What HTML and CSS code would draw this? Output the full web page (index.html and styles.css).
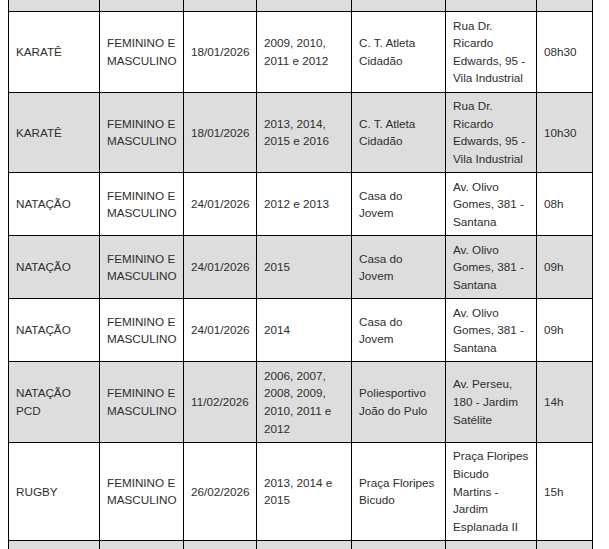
FILE: index.html
```html
<!DOCTYPE html>
<html lang="pt-BR">
<head>
<meta charset="utf-8">
<title>Calendário</title>
<link rel="stylesheet" href="styles.css">
</head>
<body>
<div class="viewport">
<table class="schedule">
  <colgroup>
    <col class="c-mod">
    <col class="c-nai">
    <col class="c-data">
    <col class="c-ano">
    <col class="c-local">
    <col class="c-end">
    <col class="c-hora">
  </colgroup>
  <tbody>
    <tr class="alt spacer"><td></td><td></td><td></td><td></td><td></td><td></td><td></td></tr>
    <tr>
      <td>KARATÊ</td>
      <td>FEMININO E MASCULINO</td>
      <td>18/01/2026</td>
      <td>2009, 2010, 2011 e 2012</td>
      <td>C. T. Atleta Cidadão</td>
      <td>Rua Dr. Ricardo Edwards, 95 - Vila Industrial</td>
      <td>08h30</td>
    </tr>
    <tr class="alt">
      <td>KARATÊ</td>
      <td>FEMININO E MASCULINO</td>
      <td>18/01/2026</td>
      <td>2013, 2014, 2015 e 2016</td>
      <td>C. T. Atleta Cidadão</td>
      <td>Rua Dr. Ricardo Edwards, 95 - Vila Industrial</td>
      <td>10h30</td>
    </tr>
    <tr>
      <td>NATAÇÃO</td>
      <td>FEMININO E MASCULINO</td>
      <td>24/01/2026</td>
      <td>2012 e 2013</td>
      <td>Casa do Jovem</td>
      <td>Av. Olivo Gomes, 381 - Santana</td>
      <td>08h</td>
    </tr>
    <tr class="alt">
      <td>NATAÇÃO</td>
      <td>FEMININO E MASCULINO</td>
      <td>24/01/2026</td>
      <td>2015</td>
      <td>Casa do Jovem</td>
      <td>Av. Olivo Gomes, 381 - Santana</td>
      <td>09h</td>
    </tr>
    <tr>
      <td>NATAÇÃO</td>
      <td>FEMININO E MASCULINO</td>
      <td>24/01/2026</td>
      <td>2014</td>
      <td>Casa do Jovem</td>
      <td>Av. Olivo Gomes, 381 - Santana</td>
      <td>09h</td>
    </tr>
    <tr class="alt">
      <td>NATAÇÃO PCD</td>
      <td>FEMININO E MASCULINO</td>
      <td>11/02/2026</td>
      <td>2006, 2007, 2008, 2009, 2010, 2011 e 2012</td>
      <td>Poliesportivo João do Pulo</td>
      <td>Av. Perseu, 180 - Jardim Satélite</td>
      <td>14h</td>
    </tr>
    <tr>
      <td>RUGBY</td>
      <td>FEMININO E MASCULINO</td>
      <td>26/02/2026</td>
      <td>2013, 2014 e 2015</td>
      <td>Praça Floripes Bicudo</td>
      <td>Praça Floripes Bicudo Martins - Jardim Esplanada II</td>
      <td>15h</td>
    </tr>
    <tr class="alt spacer"><td></td><td></td><td></td><td></td><td></td><td></td><td></td></tr>
  </tbody>
</table>
</div>
</body>
</html>
```

FILE: styles.css
```css
html {
  overflow: hidden;
  background: #ffffff;
}

body {
  margin: 0;
  padding: 0 8px;
  font-family: "Liberation Sans", Arial, sans-serif;
  color: #2e2e2e;
}

.viewport {
  height: 549px;
  overflow: hidden;
}

.schedule {
  border-collapse: collapse;
  table-layout: fixed;
  width: 585px;
  margin-top: -30px;
  font-size: 11.7px;
  line-height: 17.65px;
}

.c-mod { width: 91px; }
.c-nai { width: 84px; }
.c-data { width: 73px; }
.c-ano { width: 95px; }
.c-local { width: 94px; }
.c-end { width: 91px; }
.c-hora { width: 56px; }

.schedule td {
  border: 1px solid #000000;
  padding: 4.5px 7px;
  vertical-align: middle;
  text-align: left;
  overflow: visible;
}

.schedule tr.alt td {
  background: #dddddd;
}

.schedule tr.spacer td {
  height: 40px;
  padding: 0;
}
```
